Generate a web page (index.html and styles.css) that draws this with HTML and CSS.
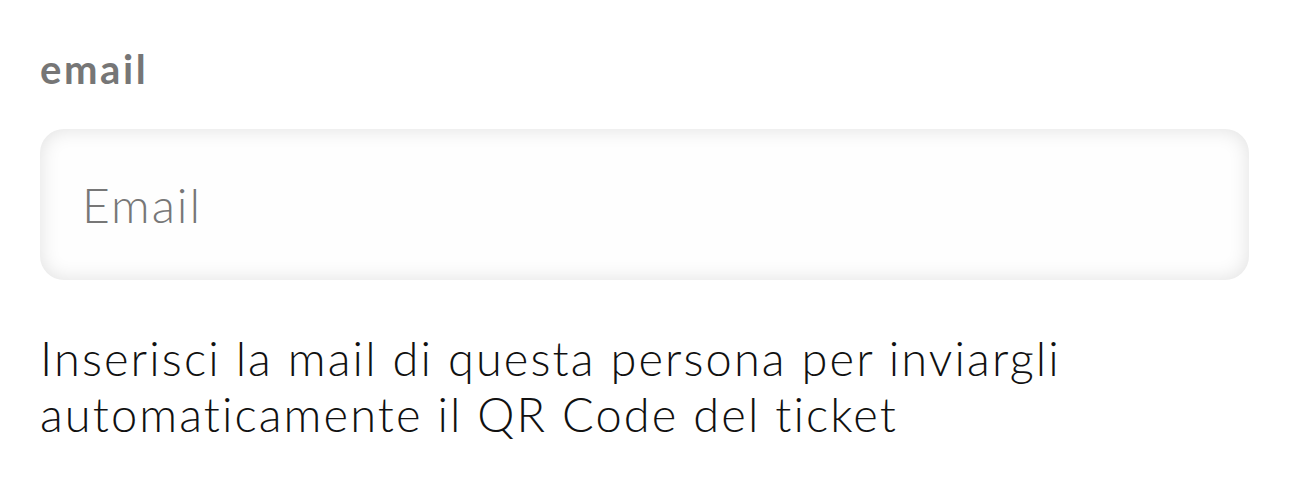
FILE: index.html
```html
<!DOCTYPE html>
<html lang="it">
<head>
<meta charset="utf-8">
<link rel="stylesheet" href="styles.css">
</head>
<body>
<div class="field">
  <label class="field-label" for="email">email</label>
  <div class="field-input"><input id="email" type="email" placeholder="Email"></div>
  <p class="field-help">Inserisci la mail di questa persona per inviargli<br>automaticamente il QR Code del ticket</p>
</div>
</body>
</html>
```
FILE: styles.css
```css
html, body { margin: 0; padding: 0; background: #fff; }
body { font-family: Lato, "Noto Sans", sans-serif; }
.field { padding: 45px 41px 0 40px; display: flex; flex-direction: column; }
.field-label { font-weight: 700; font-size: 40px; letter-spacing: 2.6px; color: #767676; line-height: 48px; }
.field-input { margin-top: 36px; height: 151px; border-radius: 24px; background: #fefefe; box-shadow: inset 0 0 20px rgba(0,0,0,0.12); display: flex; align-items: center; }
.field-input input { border: 0; background: transparent; outline: none; font-family: inherit; font-weight: 300; font-size: 48px; letter-spacing: 2px; color: #777; padding: 0 0 0 42px; width: 100%; }
.field-input input::placeholder { color: #777; opacity: 1; }
.field-help { margin: 50px 0 0; font-weight: 300; font-size: 47px; letter-spacing: 2.1px; line-height: 56px; color: #111; }
```
